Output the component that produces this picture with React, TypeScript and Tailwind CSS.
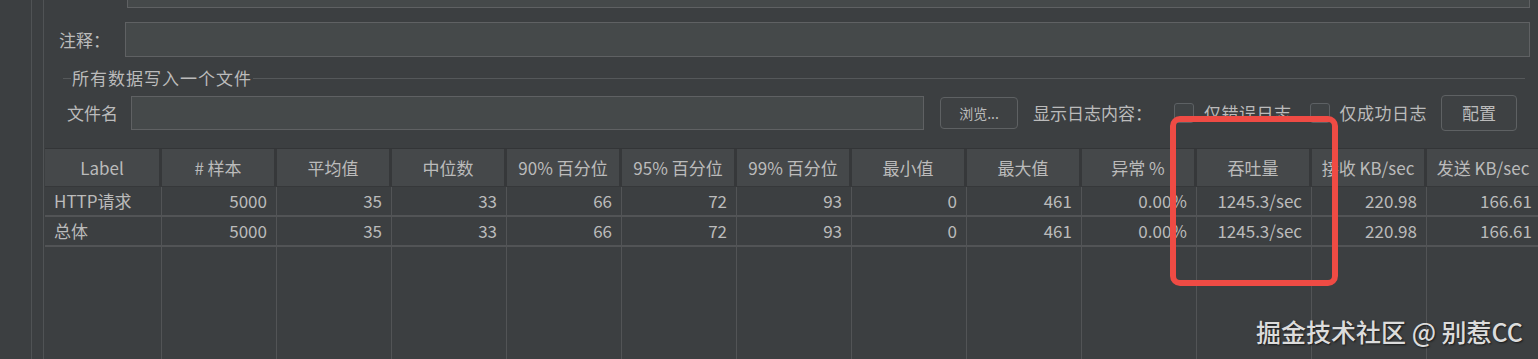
const columns = [
  "Label",
  "# 样本",
  "平均值",
  "中位数",
  "90% 百分位",
  "95% 百分位",
  "99% 百分位",
  "最小值",
  "最大值",
  "异常 %",
  "吞吐量",
  "接收 KB/sec",
  "发送 KB/sec",
];

const rows = [
  ["HTTP请求", "5000", "35", "33", "66", "72", "93", "0", "461", "0.00%", "1245.3/sec", "220.98", "166.61"],
  ["总体", "5000", "35", "33", "66", "72", "93", "0", "461", "0.00%", "1245.3/sec", "220.98", "166.61"],
];

const font = { fontFamily: '"Noto Sans CJK SC", "Noto Sans", sans-serif' };

const Checkbox = ({ label }: { label: string }) => (
  <label className="flex items-center gap-[10px]">
    <span className="h-[20px] w-[20px] rounded-[3px] border border-[#5d6164] bg-[#3f4345]" />
    <span className="tracking-[0.5px]">{label}</span>
  </label>
);

const App = () => {
  return (
    <main
      className="relative flex h-[359px] w-[1538px] overflow-hidden bg-[#3c3f41] text-[17px] text-[#bbbbbb]"
      style={font}
    >
      {/* left gutters */}
      <div className="w-[32px] shrink-0 border-r border-[#505355]" />
      <div className="w-[12px] shrink-0 border-r border-[#505355]" />

      <div className="flex min-w-0 flex-1 flex-col">
        {/* bottom of previous input */}
        <div className="ml-[83px] mr-[8px] h-[8px] border-x border-b border-[#5f6163] bg-[#45494a]" />

        {/* 注释 */}
        <div className="mt-[14px] flex h-[35px] items-center">
          <span className="w-[81px] pl-[15px]">注释：</span>
          <div className="mr-[8px] h-full flex-1 border border-[#5f6163] bg-[#45494a]" />
        </div>

        {/* fieldset title */}
        <div className="mt-[11px] flex h-[20px] items-center">
          <div className="ml-[19px] h-px w-[8px] bg-[#55585a]" />
          <span className="px-[1px] tracking-[1px]">所有数据写入一个文件</span>
          <div className="mr-[13px] h-px flex-1 bg-[#55585a]" />
        </div>

        {/* file row */}
        <div className="mt-[7px] flex h-[36px] items-center">
          <span className="w-[87px] pl-[23px]">文件名</span>
          <div className="h-[34px] w-[793px] border border-[#5f6163] bg-[#45494a]" />
          <button className="ml-[16px] h-[32px] w-[78px] rounded-[4px] border border-[#5e6163] bg-[#3e4143] text-[14px] text-[#bbbbbb]">
            浏览...
          </button>
          <span className="ml-[15px]">显示日志内容：</span>
          <div className="ml-[22px] flex items-center gap-[18px]">
            <Checkbox label="仅错误日志" />
            <Checkbox label="仅成功日志" />
          </div>
          <button className="ml-[14px] h-[36px] w-[76px] rounded-[4px] border border-[#5e6163] bg-[#3e4143] text-[#bbbbbb]">
            配置
          </button>
        </div>

        {/* results table */}
        <div className="mt-[17px] ml-[1px] flex flex-1 flex-col border-t border-[#333537]">
          <div className="grid h-[38px] grid-cols-[117px_repeat(12,115px)]">
            {columns.map((c) => (
              <div
                key={c}
                className="flex items-center justify-center border-r-[3px] border-b border-[#36383a] bg-[#45484a] whitespace-nowrap"
              >
                {c}
              </div>
            ))}
          </div>
          {rows.map((r, i) => (
            <div key={i} className="grid h-[30px] grid-cols-[117px_repeat(12,115px)]">
              {r.map((v, j) => (
                <div
                  key={j}
                  className={
                    j === 0
                      ? "flex items-center border-r border-b-2 border-[#525456] pl-[9px] whitespace-nowrap"
                      : "flex items-center justify-end border-r border-b-2 border-[#525456] pr-[9px] whitespace-nowrap"
                  }
                >
                  {v}
                </div>
              ))}
            </div>
          ))}
          <div className="grid flex-1 grid-cols-[117px_repeat(12,115px)]">
            {columns.map((c) => (
              <div key={c} className="border-r border-[#525456]" />
            ))}
          </div>
        </div>
      </div>

      {/* annotation */}
      <div className="absolute left-[1170px] top-[116px] h-[170px] w-[168px] rounded-[10px] border-[6px] border-[#ef4b44]" />

      {/* watermark */}
      <div
        className="absolute right-[15px] top-[313px] text-[25px] font-medium text-[#dcdcdc]"
        style={{ textShadow: "1px 1px 2px rgba(0,0,0,0.6)" }}
      >
        掘金技术社区 @ 别惹CC
      </div>
    </main>
  );
};

export default App;
